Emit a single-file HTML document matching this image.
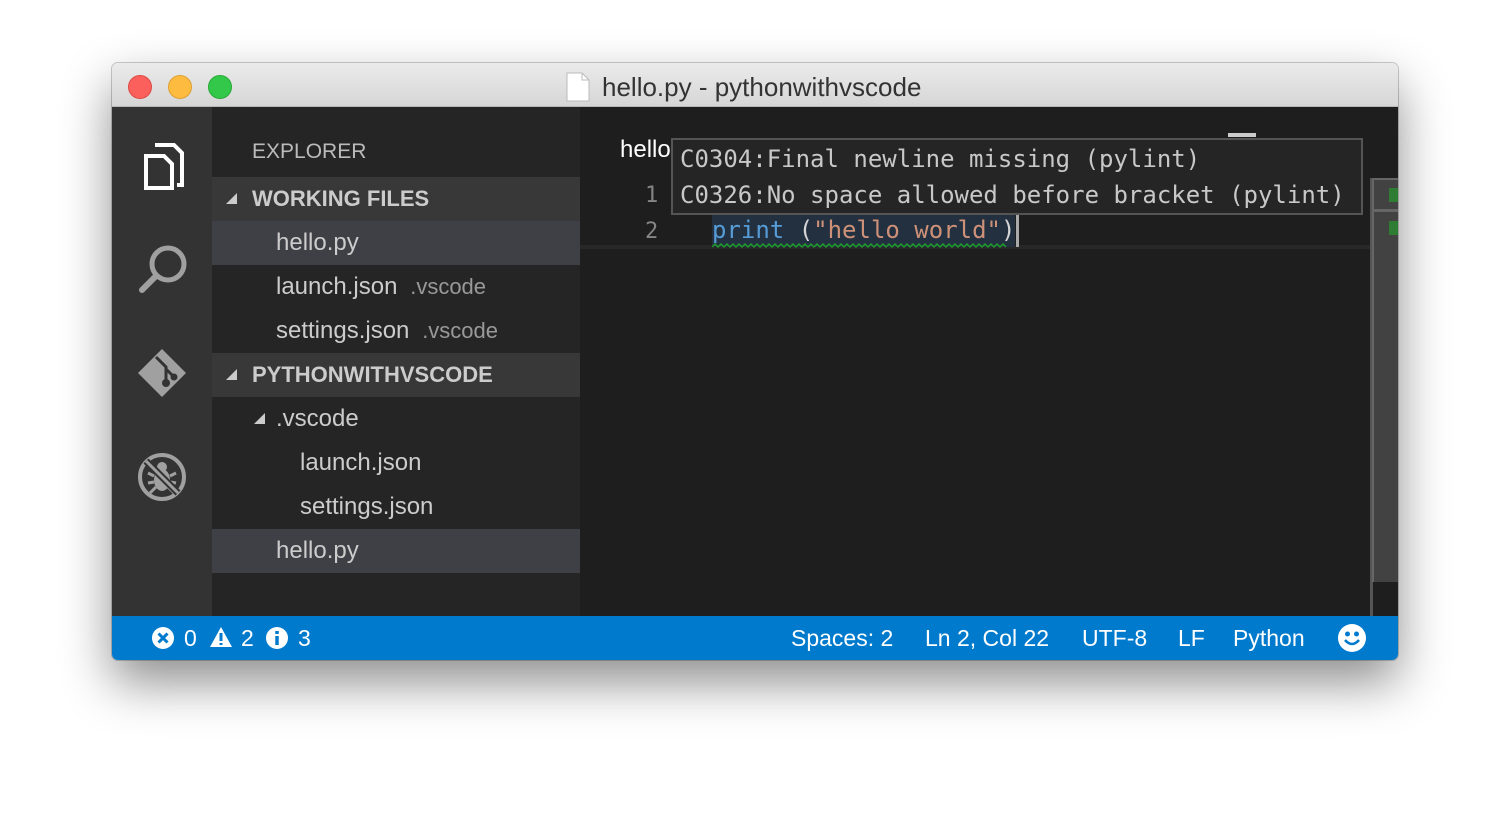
<!DOCTYPE html>
<html><head><meta charset="utf-8"><style>
*{margin:0;padding:0;box-sizing:border-box}
body{width:1510px;height:820px;background:#fff;position:relative;overflow:hidden;font-family:"Liberation Sans",sans-serif}
.win{position:absolute;left:112px;top:63px;width:1286px;height:597px;border-radius:6px;overflow:hidden;box-shadow:0 22px 50px rgba(0,0,0,.45),0 0 0 1px rgba(0,0,0,.2)}
.title{position:absolute;left:0;top:0;width:100%;height:44px;background:linear-gradient(#ebebeb,#d6d6d6);border-bottom:1px solid #b8b8b8}
.dot{position:absolute;top:12px;width:24px;height:24px;border-radius:50%}
.ttext{position:absolute;left:490px;top:9px;font-size:26px;color:#333}
.act{position:absolute;left:0;top:44px;width:100px;height:509px;background:#333}
.side{position:absolute;left:100px;top:44px;width:368px;height:509px;background:#252526;color:#ccc}
.ed{position:absolute;left:468px;top:44px;width:818px;height:509px;background:#1e1e1e}
.status{position:absolute;left:0;top:553px;width:100%;height:44px;background:#007acc;color:#fff;font-size:23px}
.row{position:absolute;left:0;width:368px;height:44px;line-height:44px;font-size:24px;color:#ccc}
.hdr{background:#383838;font-weight:bold;color:#ccc;font-size:22px}
.sel{background:#3f3f46}
.tri{position:absolute;width:0;height:0;border-left:11px solid transparent;border-bottom:11px solid #ccc}
.mono{font-family:"DejaVu Sans Mono","Liberation Mono",monospace}
.s{position:absolute;top:0;line-height:44px}
</style></head><body>
<div class="win">
 <div class="title">
  <div class="dot" style="left:16px;background:#fc605c;border:1px solid #de4a44"></div>
  <div class="dot" style="left:56px;background:#fdbc40;border:1px solid #dea032"></div>
  <div class="dot" style="left:96px;background:#34c84a;border:1px solid #27aa37"></div>
  <svg style="position:absolute;left:454px;top:9px" width="24" height="30"><path d="M1 1H16L23 8V29H1Z" fill="#fff" stroke="#bbb"/><path d="M16 1V8H23" fill="none" stroke="#bbb"/></svg>
  <div class="ttext">hello.py - pythonwithvscode</div>
 </div>
 <div class="act">
  <svg style="position:absolute;left:30px;top:34px" width="44" height="50" viewBox="0 0 44 50"><path d="M13 4H32L40 12V44H35" fill="none" stroke="#fff" stroke-width="4"/><path d="M4 15H22L30 23V47H4Z" fill="none" stroke="#fff" stroke-width="4"/></svg>
  <svg style="position:absolute;left:24px;top:136px" width="54" height="54"><circle cx="32" cy="21" r="16" fill="none" stroke="#a0a0a0" stroke-width="5"/><path d="M20 33L6 47" stroke="#a0a0a0" stroke-width="6" stroke-linecap="round"/></svg>
  <svg style="position:absolute;left:24px;top:240px" width="52" height="52"><path d="M26 2L50 26L26 50L2 26Z" fill="#a0a0a0"/><path d="M20 10L30 20V34M30 22L38 30" stroke="#333" stroke-width="3" fill="none"/><circle cx="30" cy="36" r="4" fill="#333"/><circle cx="38" cy="30" r="3.5" fill="#333"/></svg>
  <svg style="position:absolute;left:24px;top:344px" width="52" height="52"><circle cx="26" cy="26" r="22" fill="none" stroke="#a0a0a0" stroke-width="4"/><ellipse cx="26" cy="29" rx="8" ry="11" fill="#a0a0a0"/><circle cx="26" cy="16" r="5" fill="#a0a0a0"/><path d="M12 22L18 25M12 32L18 31M40 22L34 25M40 32L34 31M14 42L20 36M38 42L32 36" stroke="#a0a0a0" stroke-width="3"/><path d="M10 10L42 42" stroke="#333" stroke-width="7"/><path d="M10 10L42 42" stroke="#a0a0a0" stroke-width="3"/></svg>
 </div>
 <div class="side">
  <div class="row" style="top:0;height:70px;line-height:90px;font-size:21px;color:#bbb"><span class="s" style="left:40px;line-height:90px">EXPLORER</span></div>
  <div class="row hdr" style="top:70px"><div class="tri" style="left:14px;top:16px"></div><span class="s" style="left:40px">WORKING FILES</span></div>
  <div class="row sel" style="top:114px"><span class="s" style="left:64px">hello.py</span></div>
  <div class="row" style="top:158px"><span class="s" style="left:64px">launch.json <span style="font-size:22px;color:#999">&nbsp;.vscode</span></span></div>
  <div class="row" style="top:202px"><span class="s" style="left:64px">settings.json <span style="font-size:22px;color:#999">&nbsp;.vscode</span></span></div>
  <div class="row hdr" style="top:246px"><div class="tri" style="left:14px;top:16px"></div><span class="s" style="left:40px">PYTHONWITHVSCODE</span></div>
  <div class="row" style="top:290px"><div class="tri" style="left:42px;top:16px"></div><span class="s" style="left:64px">.vscode</span></div>
  <div class="row" style="top:334px"><span class="s" style="left:88px">launch.json</span></div>
  <div class="row" style="top:378px"><span class="s" style="left:88px">settings.json</span></div>
  <div class="row sel" style="top:422px"><span class="s" style="left:64px">hello.py</span></div>
 </div>
 <div class="ed">
  <div style="position:absolute;left:40px;top:29px;font-size:24px;color:#fff">hello</div>
  <div style="position:absolute;left:648px;top:26px;width:28px;height:4px;background:#ccc"></div>
  <div class="mono" style="position:absolute;left:65px;top:76px;font-size:22px;color:#858585">1</div>
  <div class="mono" style="position:absolute;left:65px;top:112px;font-size:22px;color:#858585">2</div>
  <div style="position:absolute;left:0;top:138px;width:790px;height:4px;background:#282828"></div>
  <div class="mono" style="position:absolute;left:132px;top:106px;height:34px;font-size:24px;line-height:34px;white-space:pre;background:#233040;color:#d4d4d4"><span style="color:#569cd6">print</span> (<span style="color:#ce9178">"hello world"</span>)</div>
  <svg style="position:absolute;left:132px;top:136px" width="302" height="6"><path d="M0 4 l3 -3 l3 3 l3 -3 l3 3 l3 -3 l3 3 l3 -3 l3 3 l3 -3 l3 3 l3 -3 l3 3 l3 -3 l3 3 l3 -3 l3 3 l3 -3 l3 3 l3 -3 l3 3 l3 -3 l3 3 l3 -3 l3 3 l3 -3 l3 3 l3 -3 l3 3 l3 -3 l3 3 l3 -3 l3 3 l3 -3 l3 3 l3 -3 l3 3 l3 -3 l3 3 l3 -3 l3 3 l3 -3 l3 3 l3 -3 l3 3 l3 -3 l3 3 l3 -3 l3 3 l3 -3 l3 3 l3 -3 l3 3 l3 -3 l3 3 l3 -3 l3 3 l3 -3 l3 3 l3 -3 l3 3 l3 -3 l3 3 l3 -3 l3 3 l3 -3 l3 3 l3 -3 l3 3 l3 -3 l3 3 l3 -3 l3 3 l3 -3 l3 3 l3 -3 l3 3 l3 -3 l3 3 l3 -3 l3 3 l3 -3 l3 3 l3 -3 l3 3 l3 -3 l3 3 l3 -3 l3 3 l3 -3 l3 3 l3 -3 l3 3 l3 -3 l3 3 l3 -3 l3 3 l3 -3 l3 3" fill="none" stroke="#1f9b2a" stroke-width="1.5"/></svg>
  <div style="position:absolute;left:436px;top:106px;width:3px;height:34px;background:#aaa"></div>
  <div style="position:absolute;left:790px;top:71px;width:3px;height:438px;background:#555"></div>
  <div style="position:absolute;left:792px;top:71px;width:26px;height:404px;background:#424242;border-left:2px solid #666;border-top:2px solid #666"></div>
  <div style="position:absolute;left:792px;top:102px;width:26px;height:3px;background:#666"></div>
  <div style="position:absolute;left:809px;top:81px;width:9px;height:14px;background:#2e7d32"></div>
  <div style="position:absolute;left:809px;top:114px;width:9px;height:14px;background:#2e7d32"></div>
  <div class="mono" style="position:absolute;left:91px;top:31px;width:692px;height:77px;background:#252526;border:2px solid #555;color:#c8c8c8;font-size:24px;line-height:36px;padding:1px 0 0 7px;white-space:pre">C0304:Final newline missing (pylint)
C0326:No space allowed before bracket (pylint)</div>
 </div>
 <div class="status">
  <svg style="position:absolute;left:40px;top:11px" width="22" height="22"><circle cx="11" cy="11" r="11" fill="#fff"/><path d="M6.5 6.5L15.5 15.5M15.5 6.5L6.5 15.5" stroke="#007acc" stroke-width="3"/></svg>
  <span class="s" style="left:72px">0</span>
  <svg style="position:absolute;left:98px;top:10px" width="22" height="22"><path d="M11 1L22 21H0Z" fill="#fff"/><path d="M11 7V15M11 17V19" stroke="#007acc" stroke-width="3"/></svg>
  <span class="s" style="left:129px">2</span>
  <svg style="position:absolute;left:154px;top:11px" width="22" height="22"><circle cx="11" cy="11" r="11" fill="#fff"/><path d="M11 9V18M11 4V7" stroke="#007acc" stroke-width="3.5"/></svg>
  <span class="s" style="left:186px">3</span>
  <span class="s" style="left:679px">Spaces: 2</span>
  <span class="s" style="left:813px">Ln 2, Col 22</span>
  <span class="s" style="left:970px">UTF-8</span>
  <span class="s" style="left:1066px">LF</span>
  <span class="s" style="left:1121px">Python</span>
  <svg style="position:absolute;left:1226px;top:8px" width="28" height="28"><circle cx="14" cy="14" r="14" fill="#fff"/><circle cx="9.5" cy="10" r="2.5" fill="#007acc"/><circle cx="18.5" cy="10" r="2.5" fill="#007acc"/><path d="M7 16Q14 24 21 16" stroke="#007acc" stroke-width="2.5" fill="none"/></svg>
 </div>
</div>
</body></html>
